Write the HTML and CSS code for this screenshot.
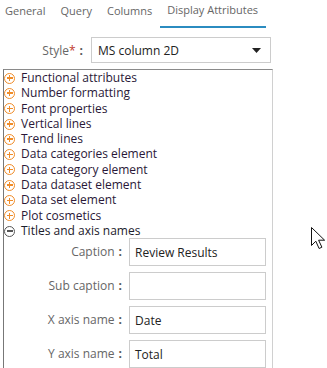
FILE: index.html
```html
<!DOCTYPE html>
<html>
<head>
<meta charset="utf-8">
<link rel="stylesheet" href="styles.css">
</head>
<body>
<div class="tabs">
  <div class="tab first">General</div>
  <div class="tab">Query</div>
  <div class="tab">Columns</div>
  <div class="tab active">Display Attributes</div>
</div>
<div class="style-row">
  <div class="style-label">Style<span class="req">*</span><span class="colon">:</span></div>
  <div class="select">
    <span>MS column 2D</span>
    <svg class="caret" width="9" height="5" viewBox="0 0 9 5"><path d="M0 0h9L4.5 5z" fill="#222"/></svg>
  </div>
</div>
<div class="box">
  <ul class="tree">
    <li><span class="ico plus"></span>Functional attributes</li>
    <li><span class="ico plus"></span>Number formatting</li>
    <li><span class="ico plus"></span>Font properties</li>
    <li><span class="ico plus"></span>Vertical lines</li>
    <li><span class="ico plus"></span>Trend lines</li>
    <li><span class="ico plus"></span>Data categories element</li>
    <li><span class="ico plus"></span>Data category element</li>
    <li><span class="ico plus"></span>Data dataset element</li>
    <li><span class="ico plus"></span>Data set element</li>
    <li><span class="ico plus"></span>Plot cosmetics</li>
    <li class="open"><span class="ico minus"></span>Titles and axis names</li>
  </ul>
  <div class="form">
    <div class="row"><div class="lbl">Caption<span class="colon">:</span></div><div class="inp">Review Results</div></div>
    <div class="row"><div class="lbl">Sub caption<span class="colon">:</span></div><div class="inp"></div></div>
    <div class="row"><div class="lbl">X axis name<span class="colon">:</span></div><div class="inp">Date</div></div>
    <div class="row"><div class="lbl">Y axis name<span class="colon">:</span></div><div class="inp">Total</div></div>
  </div>
</div>
<svg class="cursor" width="15" height="25" viewBox="0 0 15 25"><path d="M1.5 1.5v18l4.3-4.3 3.3 7.3 2.8-1.3-3.3-7h6z" fill="#fff" stroke="#111" stroke-width="1" stroke-linejoin="miter"/></svg>
</body>
</html>
```
FILE: styles.css
```css
html, body { margin: 0; padding: 0; background: #fff; }
body { font-family: "Open Sans", "Noto Sans", sans-serif; color: #333; width: 327px; height: 368px; overflow: hidden; position: relative; }
.tabs { display: flex; height: 28px; font-size: 11px; color: #666; }
.tab { padding: 0 7.5px; line-height: 22px; box-sizing: border-box; height: 28px; }
.tab.first { padding-left: 5px; }
.tab.active { border-bottom: 2px solid #2b8cc0; line-height: 20px; }
.style-row { display: flex; align-items: center; margin-top: 9px; height: 26px; }
.style-label { width: 83px; text-align: right; font-size: 12px; color: #666; }
.req { color: #c0392b; }
.colon { margin-left: 4px; font-weight: bold; color: #555; }
.select { margin-left: 8px; width: 180px; height: 26px; box-sizing: border-box; border: 1px solid #ccc; display: flex; align-items: center; justify-content: space-between; padding: 0 9px 0 6px; font-size: 12px; color: #222; }
.caret { display: block; }
.box { margin: 6px 0 0 3px; width: 270px; height: 310px; box-sizing: border-box; border-top: 1px solid #8a8a8a; border-left: 1px solid #777; border-right: 1px solid #d0d0d0; }
.tree { list-style: none; margin: 0; padding: 0; font-size: 12px; }
.tree li { line-height: 15.3px; height: 15.3px; display: flex; align-items: center; color: #2a1838; white-space: nowrap; }
.tree li.open { color: #1b202c; }
.ico { width: 11px; height: 11px; box-sizing: border-box; border: 1.5px solid #f08c28; border-radius: 50%; margin: 1px 6px 0 0; position: relative; flex: none; }
.ico::before, .ico::after { content: ""; position: absolute; background: #f08c28; }
.ico::before { left: 1.5px; right: 1.5px; top: 3.5px; height: 1.5px; }
.ico::after { top: 1.5px; bottom: 1.5px; left: 3.5px; width: 1.5px; }
.ico.minus { border-color: #555; }
.ico.minus::before { background: #555; }
.ico.minus::after { display: none; }
.form { display: flex; flex-direction: column; gap: 6px; }
.row { display: flex; align-items: center; height: 28px; }
.lbl { width: 118px; text-align: right; font-size: 12px; color: #666; margin-top: -2px; }
.inp { margin-left: 7px; width: 137px; height: 28px; box-sizing: border-box; border: 1px solid #ccc; font-size: 12px; color: #222; padding: 1px 5px 0; line-height: 26px; }
.cursor { position: absolute; left: 310px; top: 226px; }
```
